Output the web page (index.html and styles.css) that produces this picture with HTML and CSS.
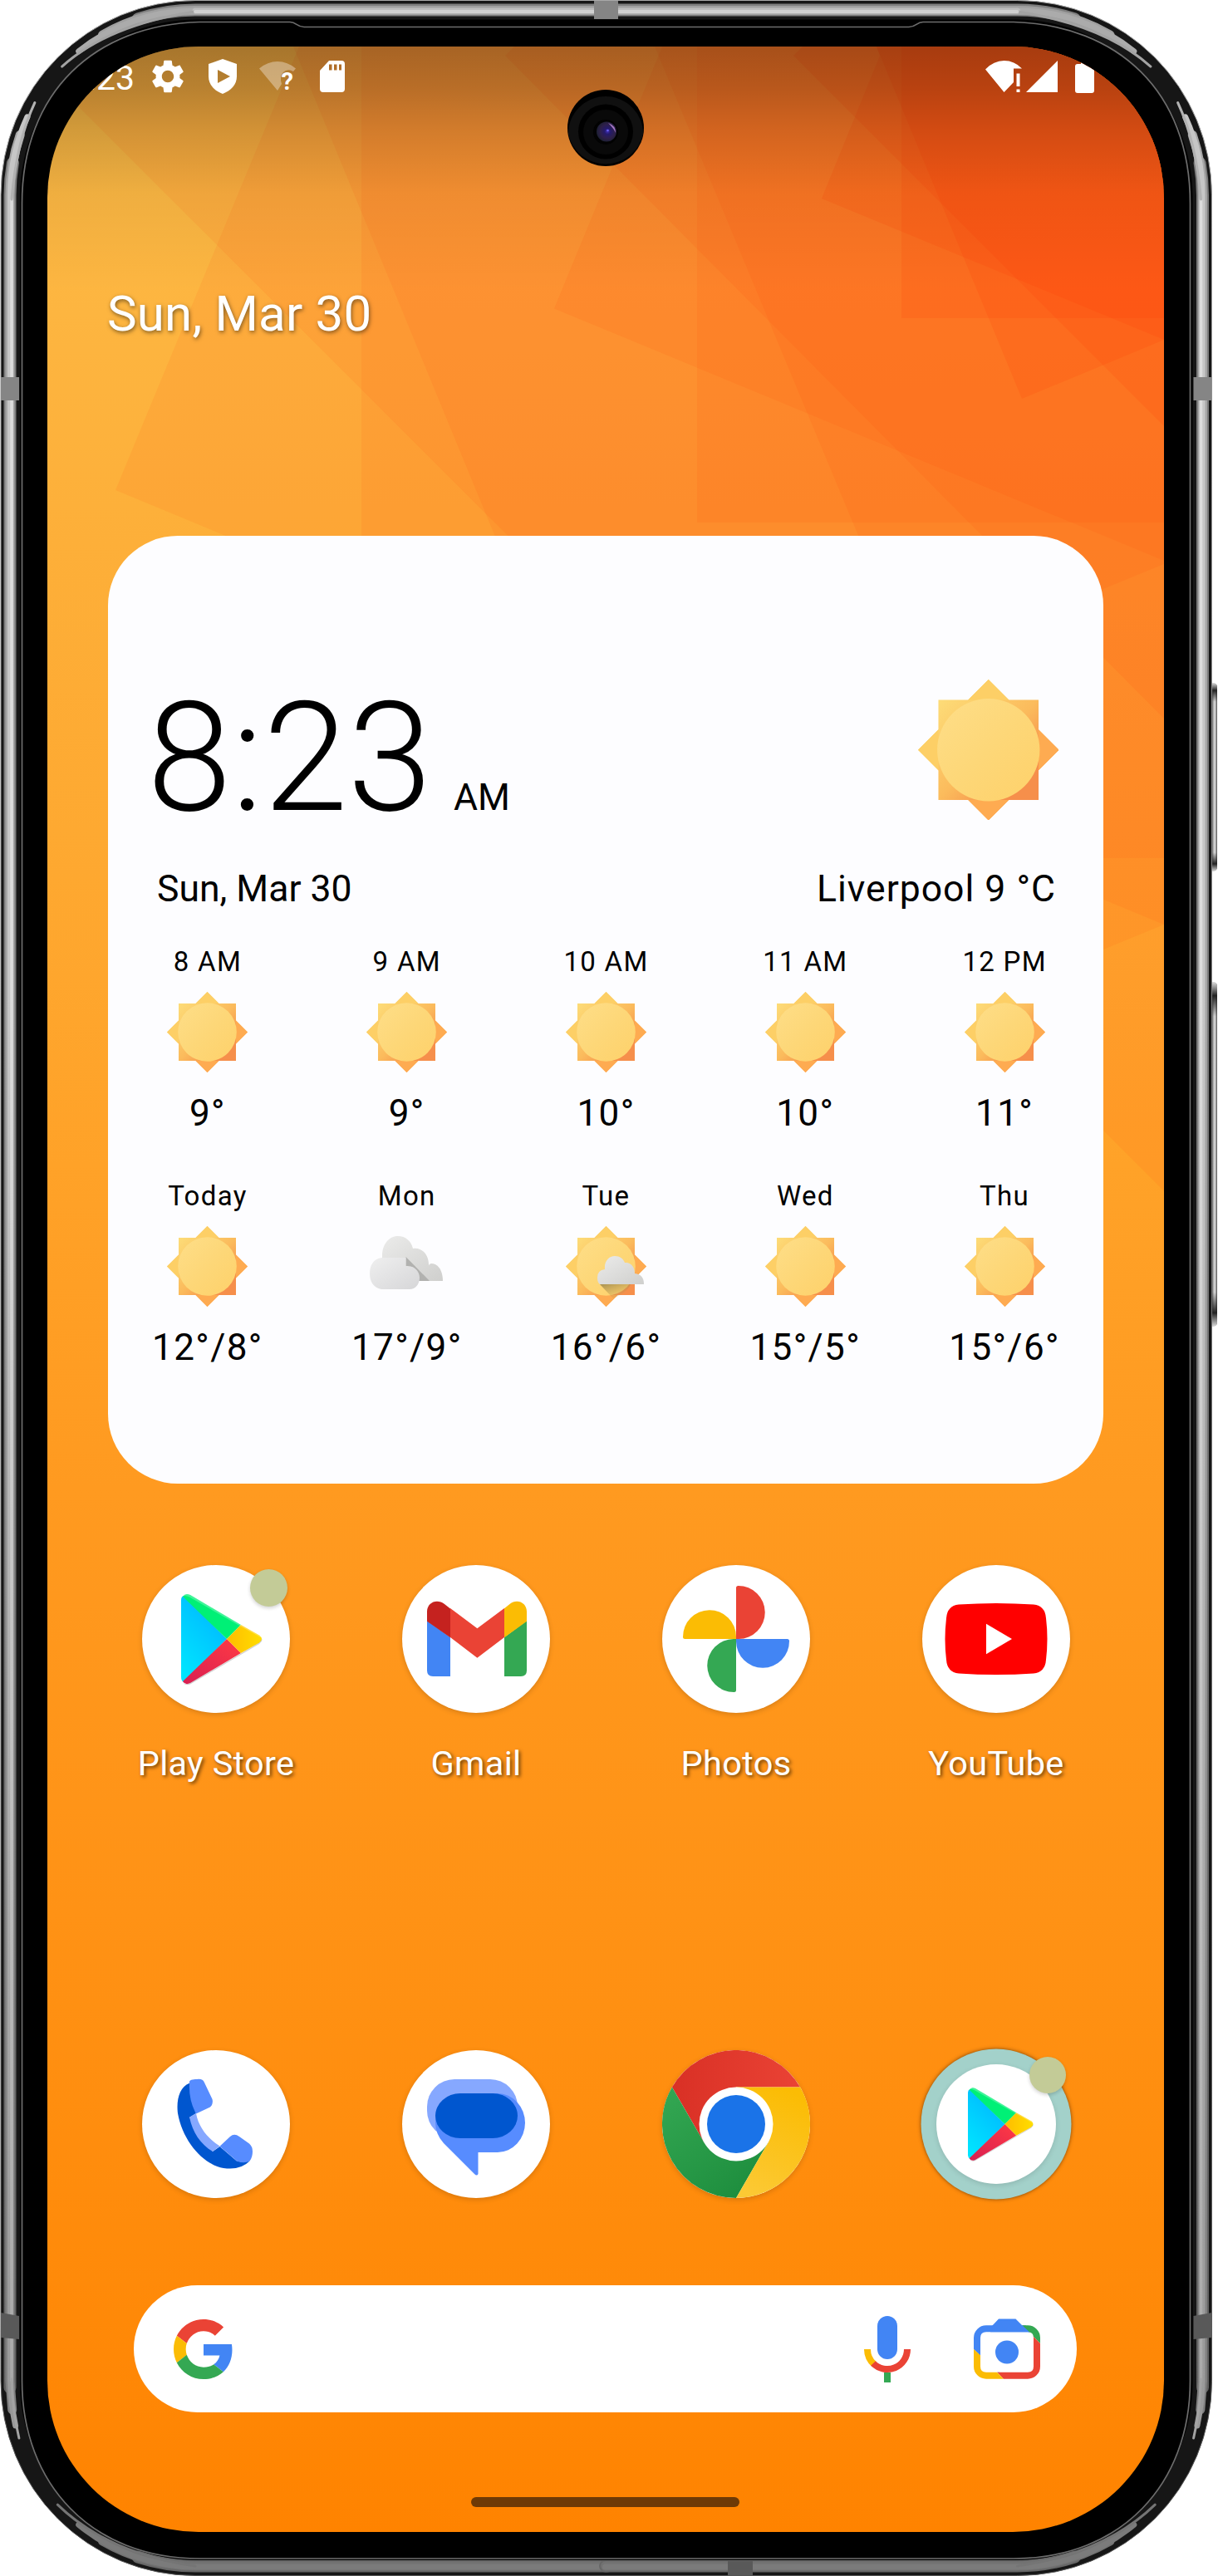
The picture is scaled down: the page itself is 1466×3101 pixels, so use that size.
FILE: index.html
```html
<!DOCTYPE html>
<html lang="en">
<head>
<meta charset="utf-8">
<title>Home screen</title>
<link rel="stylesheet" href="styles.css">
</head>
<body>
<svg class="defs" width="0" height="0" aria-hidden="true">
  <defs>
    <linearGradient id="rayA" x1="0" y1="0" x2="1" y2="1"><stop offset="0" stop-color="#fddc78"/><stop offset=".5" stop-color="#fbbb5c"/><stop offset=".8" stop-color="#f68f4b"/><stop offset="1" stop-color="#f68f4b"/></linearGradient>
    <linearGradient id="rayB" x1=".2" y1=".2" x2=".8" y2=".8"><stop offset="0" stop-color="#fdd56a"/><stop offset=".45" stop-color="#fbc962"/><stop offset=".75" stop-color="#feac52"/><stop offset="1" stop-color="#fea04b"/></linearGradient>
    <linearGradient id="disc" x1="0" y1="0" x2="1" y2="1"><stop offset="0" stop-color="#fede88"/><stop offset=".5" stop-color="#fdd778"/><stop offset="1" stop-color="#fed16a"/></linearGradient>
    <linearGradient id="cloudBack" x1="0" y1="0" x2="1" y2="1"><stop offset="0" stop-color="#ebebea"/><stop offset="1" stop-color="#cfcfcd"/></linearGradient>
    <linearGradient id="cloudFront" x1="0" y1="0" x2="1" y2="1"><stop offset="0" stop-color="#efefef"/><stop offset="1" stop-color="#d6d6d8"/></linearGradient>
    <linearGradient id="shade" x1="0" y1="0" x2=".7" y2="1"><stop offset="0" stop-color="#8a7a45" stop-opacity=".75"/><stop offset="1" stop-color="#c9a050" stop-opacity=".1"/></linearGradient>
    <linearGradient id="playBlue" x1=".8" y1="0" x2=".2" y2="1"><stop offset="0" stop-color="#00b4ff"/><stop offset="1" stop-color="#00e5ff"/></linearGradient>
    <linearGradient id="playRed" x1="1" y1="0" x2="0" y2="1"><stop offset="0" stop-color="#ff3a44"/><stop offset="1" stop-color="#d81f52"/></linearGradient>
    <linearGradient id="playYellow"><stop offset="0" stop-color="#ffbc00"/><stop offset="1" stop-color="#ffde00"/></linearGradient>
    <linearGradient id="chRed"><stop offset="0" stop-color="#d93025"/><stop offset="1" stop-color="#ea4335"/></linearGradient>
    <linearGradient id="chYellow" x1=".6" y1="0" x2=".3" y2="1"><stop offset="0" stop-color="#fbbc04"/><stop offset="1" stop-color="#fcc934"/></linearGradient>
    <linearGradient id="chGreen" x1="0" y1="0" x2=".7" y2="1"><stop offset="0" stop-color="#34a853"/><stop offset="1" stop-color="#1e8e3e"/></linearGradient>
    <symbol id="sun" viewBox="0 0 97 97">
      <path d="M48.500 0L97 48.500 48.500 97 0 48.500z" fill="url(#rayB)"/>
      <path d="M14 14h69v69H14z" fill="url(#rayA)"/>
      <path d="M48.500 0L62.500 14H34.500zM0 48.500L14 34.500v28z" fill="#fdcf66"/>
      <path d="M97 48.500L83 34.500v28zM48.500 97L34.500 83h28z" fill="#feab51"/>
      <circle cx="48.500" cy="48.500" r="35.300" fill="url(#disc)"/>
    </symbol>
    <symbol id="cloudy" viewBox="0 0 97 97">
      <path d="M20 72C14 45 17 12 38 12C47 12 53 17 55 27C67 25 75 33 74 56C85 54 92 63 91 84H20z" fill="none"/>
      <path d="M19 60V36C19 22 27 12 38 12C47 12 54 18 56 27C67 25 75 35 75 46V56Q73 46 78 45C86 45 92 53 92 66H40z" fill="url(#cloudBack)"/>
      <path d="M47.500 37L76 66H55L47.500 48z" fill="#b1b1af"/>
      <path d="M18 76C8 74 4 66 4 57C4 45 11 38 20 38L47.500 38V48C57 47 64 54 64 62C64 70 59 76 52 76z" fill="url(#cloudFront)"/>
    </symbol>
    <symbol id="partly" viewBox="0 0 97 97">
      <use href="#sun" width="97" height="97"/>
      <path d="M41 70L57 87C66 83 76 77 78 70z" fill="url(#shade)"/>
      <path d="M41 70Q38 68 38 62Q38 53 47 52C46 42 52 36 59 36C65 36 69 39 71 44C78 43 83 49 83 57Q94 58 94 70z" fill="url(#cloudBack)"/>
    </symbol>
    <symbol id="play" viewBox="0 0 178 178">
      <path d="M50 37L102 89 50 141Q47 139 47 135V42Q47 38 50 37z" fill="url(#playBlue)"/>
      <path d="M49 38Q52 33 58 36L119 72 102 89z" fill="#00f076"/>
      <path d="M49 140Q52 145 58 142L119 106 102 89z" fill="url(#playRed)"/>
      <path d="M119 72L141 84.500Q147 89 141 93.500L119 106 102 89z" fill="url(#playYellow)"/>
      <path d="M49 141Q52 145 58 142L141 93.500 144.500 89Q145 92 141 95L58 143.500Q52 146 49 141z" fill="#000" opacity=".18"/>
      <path d="M49 37.500Q52 33 58 36L141 84.500 144 88Q141 86 119 74L57 38.500Q52 36 49 37.500z" fill="#fff" opacity=".25"/>
    </symbol>
  </defs>
</svg>

<main class="phone">
  <svg class="frame" viewBox="0 0 1466 3101" aria-hidden="true">
    <defs>
      <linearGradient id="btn"><stop offset="0" stop-color="#333"/><stop offset=".55" stop-color="#333"/><stop offset=".75" stop-color="#d8d8d8"/><stop offset=".88" stop-color="#bdbdbd"/><stop offset="1" stop-color="#444"/></linearGradient>
      <linearGradient id="btnEnds" x1="0" y1="0" x2="0" y2="1"><stop offset="0" stop-color="#ddd"/><stop offset=".04" stop-color="#222"/><stop offset=".1" stop-color="#222" stop-opacity="0"/><stop offset=".9" stop-color="#222" stop-opacity="0"/><stop offset=".96" stop-color="#222"/><stop offset="1" stop-color="#ddd"/></linearGradient>
      <linearGradient id="shellTone" x1="0" y1="0" x2="0" y2="1"><stop offset="0" stop-color="#a8a8a8"/><stop offset=".5" stop-color="#777"/><stop offset="1" stop-color="#555"/></linearGradient>
      <linearGradient id="m1" gradientUnits="userSpaceOnUse" x1="0" y1="1200" x2="0" y2="2900"><stop offset="0" stop-color="#7c7c7c"/><stop offset="1" stop-color="#616161"/></linearGradient>
      <linearGradient id="m2" gradientUnits="userSpaceOnUse" x1="0" y1="1200" x2="0" y2="2900"><stop offset="0" stop-color="#a6a6a6"/><stop offset="1" stop-color="#7f7f7f"/></linearGradient>
      <linearGradient id="m3" gradientUnits="userSpaceOnUse" x1="0" y1="1200" x2="0" y2="2900"><stop offset="0" stop-color="#c6c6c6"/><stop offset="1" stop-color="#999"/></linearGradient>
      <linearGradient id="m4" gradientUnits="userSpaceOnUse" x1="0" y1="1200" x2="0" y2="2900"><stop offset="0" stop-color="#dcdcdc"/><stop offset="1" stop-color="#a9a9a9"/></linearGradient>
      <g id="halfShell" fill="none" stroke-linecap="round">
        <g stroke-width="15"><path stroke="url(#m1)" d="M15.400 196.300A223 223 0 0 0 12 235V2874"/><path stroke="#7f7f7f" d="M166.100 22.900A223 223 0 0 1 235 12H731"/><path stroke="#666" d="M166.100 3078.100A223 223 0 0 0 235 3089H731"/></g>
        <g stroke-width="11"><path stroke="url(#m2)" d="M24.200 162.400A223 223 0 0 0 12 235V2866L14.700 2900.900"/><path stroke="#a0a0a0" d="M123.500 41.900A223 223 0 0 1 235 12.500H731"/><path stroke="#727272" d="M123.500 3059.100A223 223 0 0 0 235 3089H731"/></g>
        <g stroke-width="7"><path stroke="url(#m3)" d="M32.900 140.800A223 223 0 0 0 12.500 235V2866Q13 2894 18.600 2920"/><path stroke="#ababab" d="M94.700 61.700A223 223 0 0 1 235 13"/><path stroke="#bcbcbc" d="M235 13H731"/><path stroke="#7b7b7b" d="M94.700 3039.300A223 223 0 0 0 235 3090H731"/></g>
        <path stroke-width="3.500" stroke="url(#m4)" d="M14 240V2866"/><path stroke-width="3" stroke="#b2b2b2" d="M41.900 123.500Q20 170 14 240"/><path stroke-width="3" stroke="#a3a3a3" d="M14 2864Q15 2902 22.900 2935"/>
        <path stroke-width="3" stroke="#a3a3a3" d="M74.600 80.100Q130 30 235 14"/><path stroke-width="4" stroke="#d0d0d0" d="M235 14H731"/><path stroke-width="3" stroke="#757575" d="M69.300 3015.200Q130 3074 235 3089"/>
      </g>
    </defs>
    <rect x="1450" y="822" width="15" height="227" rx="5" fill="url(#btn)"/>
    <rect x="1450" y="822" width="15" height="227" rx="5" fill="url(#btnEnds)"/>
    <rect x="1450" y="1182" width="15" height="415" rx="5" fill="url(#btn)"/>
    <rect x="1450" y="1182" width="15" height="415" rx="5" fill="url(#btnEnds)"/>
    <rect x="1" y=".5" width="1457.500" height="3100" rx="234" fill="#161616" stroke="url(#shellTone)"/>
    <use href="#halfShell"/>
    <use href="#halfShell" transform="matrix(-1 0 0 1 1459.500 0)"/>
    <path fill="#858585" d="M1 454h22v28H1zM1436.500 454h22v28h-22zM715 1h29v22h-29z"/>
    <path d="M1 2784l22 4v28l-22-2zM1458.500 2784l-22 4v28l22-2zM876 3083h30v17h-30z" fill="#595959"/>
    <rect x="24" y="23.500" width="1411.500" height="3058.500" rx="214" fill="#000"/>
    <path d="M240 26.500H349C357 26.500 357 32.500 366 32.500H1094C1103 32.500 1103 26.500 1111 26.500H1220C1345 30 1432.500 110 1432.500 245V2866C1432.500 2990 1350 3080 1220 3080H240C110 3080 26.500 2990 26.500 2866V245C26.500 110 115 30 240 26.500z" fill="#000" stroke="#6d6d6d" stroke-width="1.700"/>
  </svg>

  <section class="screen">
    <svg class="wallpaper" viewBox="57 56 1344 2992" aria-hidden="true">
      <defs>
        <linearGradient id="base" x1="0" y1="0" x2="0" y2="1"><stop offset="0" stop-color="#fdbc48"/><stop offset=".2" stop-color="#fdaf39"/><stop offset=".45" stop-color="#ffa228"/><stop offset=".58" stop-color="#ff9a20"/><stop offset=".75" stop-color="#ff9215"/><stop offset=".9" stop-color="#ff8a09"/><stop offset="1" stop-color="#ff8300"/></linearGradient>
        <linearGradient id="topShade" gradientUnits="userSpaceOnUse" x1="0" y1="56" x2="0" y2="350"><stop offset="0" stop-opacity=".34"/><stop offset=".17" stop-opacity=".27"/><stop offset=".35" stop-opacity=".165"/><stop offset=".6" stop-opacity=".055"/><stop offset="1" stop-opacity="0"/></linearGradient>
      </defs>
      <path d="M57 56h1344v2992H57z" fill="url(#base)"/>
      <g fill="#ff3c0a" fill-opacity=".075">
        <path d="M435 56H1401V1033H435z"/>
        <path d="M139 590L360 56H1401V1113z"/>
        <path d="M353 56L877 1328 1401 1113V56z"/>
        <path d="M57 91V56H1401V1434z"/>
      </g>
      <g fill="#ff3c0a" fill-opacity=".095">
        <path d="M839 56H1401V629H839z"/>
        <path d="M667 371.500L797 56H1401V675z"/>
        <path d="M788 56L1099 803 1401 679V56z"/>
        <path d="M619 56L608 67 1401 865V56z"/>
      </g>
      <g fill="#ff3c0a" fill-opacity=".14">
        <path d="M1085 56H1401V383H1085z"/>
        <path d="M989 239L1059 67 1055 56H1401V409z"/>
        <path d="M1055 56L1230 480 1401 409V56z"/>
        <path d="M966 56L955 67 1401 513V56z"/>
      </g>
      <path d="M57 56h1344v300H57z" fill="url(#topShade)"/>
    </svg>

    <div class="statusbar">
      <div class="status-left">
        <span class="status-time">8:23</span>
        <svg class="ic-gear" width="40" height="40" viewBox="2 2 20 20"><path fill="#fff" d="M19.140 12.940c.04-.3.060-.61.060-.94s-.02-.64-.07-.94l2.030-1.580c.18-.14.230-.41.120-.61l-1.920-3.320c-.12-.22-.37-.29-.59-.22l-2.390.96c-.5-.38-1.030-.7-1.620-.94l-.36-2.540c-.04-.24-.24-.41-.48-.41h-3.840c-.24 0-.43.170-.47.410l-.36 2.540c-.59.240-1.130.57-1.620.94l-2.390-.96c-.22-.08-.47 0-.59.220L2.740 8.870c-.12.210-.08.470.12.610l2.030 1.580c-.05.3-.09.63-.09.94s.02.640.070.94l-2.030 1.580c-.18.140-.23.410-.12.610l1.920 3.320c.12.220.37.290.59.220l2.390-.96c.5.380 1.030.7 1.620.94l.36 2.540c.05.240.24.410.48.410h3.840c.24 0 .44-.17.470-.41l.36-2.540c.59-.24 1.130-.56 1.620-.94l2.390.96c.22.080.47 0 .59-.22l1.920-3.320c.12-.22.070-.47-.12-.61l-2.010-1.580zM12 15.600c-1.980 0-3.600-1.620-3.600-3.600s1.620-3.600 3.600-3.600 3.600 1.620 3.600 3.600-1.620 3.600-3.600 3.600z"/></svg>
        <svg class="ic-shield" width="34" height="42" viewBox="0 0 34 42"><path fill="#fff" fill-rule="evenodd" d="M17 0L34 6V21C34 31 27 38 17 42C7 38 0 31 0 21V6zM11 13v16l15-8z"/></svg>
        <svg class="ic-wifi" width="46" height="38" viewBox="0 0 46 38"><path fill="#fff" fill-opacity=".35" d="M0 9.500Q10 1 22 1T44 9.500L41 13Q34 9 29 14T27 28L22 36z"/><text x="26.500" y="34.500" class="wifi-mark">?</text></svg>
        <svg class="ic-sd" width="30" height="38" viewBox="0 0 30 38"><path fill="#fff" fill-rule="evenodd" d="M11 0H26Q30 0 30 4V34Q30 38 26 38H4Q0 38 0 34V12zM11 4.500v7h3.500v-7zM17 4.500v7h3.500v-7zM23 4.500v7h3v-7z"/></svg>
      </div>
      <div class="status-right">
        <svg width="44" height="38" viewBox="0 0 44 38"><path fill="#fff" d="M0 10.500Q10 0 22.500 0T44 9.500H34V26L22.500 38zM37.500 15.500h4V31h-4zM37.500 34.500h4V38h-4z"/></svg>
        <svg class="ic-signal" width="38" height="38" viewBox="0 0 38 38"><path fill="#fff" d="M38 0V38H0z"/></svg>
        <svg class="ic-battery" width="23" height="39" viewBox="0 0 23 39"><path fill="#fff" d="M7 0h9v4h4q3 0 3 3v29q0 3-3 3H3q-3 0-3-3V7q0-3 3-3h4z"/></svg>
      </div>
    </div>

    <div class="glance">Sun, Mar 30</div>

    <article class="weather">
      <div class="weather-head">
        <div class="clock"><span class="clock-time">8:23</span><span class="clock-ampm">AM</span></div>
        <svg class="sun-big"><use href="#sun"/></svg>
      </div>
      <div class="weather-sub"><span>Sun, Mar 30</span><span class="place">Liverpool 9 °C</span></div>
      <div class="forecast">
        <div class="slot"><span class="slot-label">8 AM</span><svg class="slot-icon"><use href="#sun"/></svg><span class="slot-temp">9°</span></div>
        <div class="slot"><span class="slot-label">9 AM</span><svg class="slot-icon"><use href="#sun"/></svg><span class="slot-temp">9°</span></div>
        <div class="slot"><span class="slot-label">10 AM</span><svg class="slot-icon"><use href="#sun"/></svg><span class="slot-temp">10°</span></div>
        <div class="slot"><span class="slot-label">11 AM</span><svg class="slot-icon"><use href="#sun"/></svg><span class="slot-temp">10°</span></div>
        <div class="slot"><span class="slot-label">12 PM</span><svg class="slot-icon"><use href="#sun"/></svg><span class="slot-temp">11°</span></div>
      </div>
      <div class="forecast forecast-days">
        <div class="slot"><span class="slot-label">Today</span><svg class="slot-icon"><use href="#sun"/></svg><span class="slot-temp">12°/8°</span></div>
        <div class="slot"><span class="slot-label">Mon</span><svg class="slot-icon"><use href="#cloudy"/></svg><span class="slot-temp">17°/9°</span></div>
        <div class="slot"><span class="slot-label">Tue</span><svg class="slot-icon"><use href="#partly"/></svg><span class="slot-temp">16°/6°</span></div>
        <div class="slot"><span class="slot-label">Wed</span><svg class="slot-icon"><use href="#sun"/></svg><span class="slot-temp">15°/5°</span></div>
        <div class="slot"><span class="slot-label">Thu</span><svg class="slot-icon"><use href="#sun"/></svg><span class="slot-temp">15°/6°</span></div>
      </div>
    </article>

    <nav class="apps">
      <div class="app"><div class="disc"><svg class="glyph"><use href="#play"/></svg><i class="dot"></i></div><span class="app-name">Play Store</span></div>
      <div class="app"><div class="disc">
        <svg class="glyph" viewBox="0 0 178 178">
          <path d="M30 67V127Q30 134 37 134H58V87z" fill="#4285f4"/>
          <path d="M150 67V127Q150 134 143 134H123V87z" fill="#34a853"/>
          <path d="M58 52L90.400 76.300 123 52V87L90.400 111.700 58 87z" fill="#ea4335"/>
          <path d="M30 67.700V56C30 45 42 40 51 47L58 52.600V87.200z" fill="#c5221f"/>
          <path d="M150 67.700V56C150 45 138 40 129.500 47L123 52.200V87.200z" fill="#fbbc04"/>
        </svg></div><span class="app-name">Gmail</span></div>
      <div class="app"><div class="disc">
        <svg class="glyph" viewBox="0 0 178 178">
          <path d="M89 89V27.500Q89 25 91.500 25A32 32 0 0 1 92 89z" fill="#ea4335"/>
          <path d="M89 89V27.500Q89 25 91.500 25A32 32 0 0 1 92 89z" fill="#4285f4" transform="rotate(90 89 89)"/>
          <path d="M89 89V27.500Q89 25 91.500 25A32 32 0 0 1 92 89z" fill="#34a853" transform="rotate(180 89 89)"/>
          <path d="M89 89V27.500Q89 25 91.500 25A32 32 0 0 1 92 89z" fill="#fbbc04" transform="rotate(270 89 89)"/>
        </svg></div><span class="app-name">Photos</span></div>
      <div class="app"><div class="disc">
        <svg class="glyph" viewBox="0 0 178 178">
          <path d="M44 47.500Q89 44.500 134 47.500Q148 49 149 64Q152 89 149 114Q148 129 134 130.500Q89 133.500 44 130.500Q30 129 29 114Q26 89 29 64Q30 49 44 47.500z" fill="#f00"/>
          <path d="M77 70.700L108 89 77 107.300z" fill="#fff"/>
        </svg></div><span class="app-name">YouTube</span></div>
    </nav>

    <nav class="dock">
      <div class="disc">
        <svg class="glyph" viewBox="0 0 178 178">
          <path d="M57 39.700C45 44 41 60 43 76C49 110 74 138 98 142Q118 145 129.500 133.500L114 133.500 93.500 116 85 122 57 81 65 76z" fill="#0056cf"/>
          <path d="M65 76L57 80.700C61 99 70 113 85 122L93.500 115.500C79 106 68 93 65 76z" fill="#86a8ff"/>
          <path d="M57 40C56 36 60 35 66 35Q73 34 75 39L84.500 59Q86 65 82 68.500L65 76.500Q56 60 57 40z" fill="#578cff"/>
          <path d="M93.500 115.700L106 104Q111 99.500 117 104L129 112.500Q133 116 133 122Q133 129 129.500 133.500Q123 137 114.500 133.700z" fill="#578cff"/>
        </svg></div>
      <div class="disc">
        <svg class="glyph" viewBox="0 0 178 178">
          <rect x="30" y="35" width="109" height="71" rx="33" fill="#86a8ff"/>
          <path d="M73 52H115A33 35.500 0 0 1 115 123H91.500V149Q90 152 87 149L50 112Q40 101 40 87A33 35 0 0 1 73 52z" fill="#578cff"/>
          <rect x="40" y="52" width="99" height="54" rx="30" ry="27" fill="#0056cf"/>
        </svg></div>
      <div class="disc">
        <svg class="glyph" viewBox="0 0 178 178">
          <path d="M11.900 44.500A89 89 0 0 1 166.100 44.500H89L50.500 111.200z" fill="url(#chRed)"/>
          <path d="M11.900 44.500A89 89 0 0 0 89 178L127.500 111.200H50.500z" fill="url(#chGreen)"/>
          <path d="M166.100 44.500A89 89 0 0 1 89 178L127.500 111.200 89 44.500z" fill="url(#chYellow)"/>
          <circle cx="89" cy="89" r="44.500" fill="#fff"/><circle cx="89" cy="89" r="35" fill="#1a73e8"/>
        </svg></div>
      <div class="disc folder"><div class="folder-inner"><svg class="glyph"><use href="#play"/></svg></div><i class="dot"></i></div>
    </nav>

    <div class="search">
      <svg class="google" viewBox="0 0 48 48"><path fill="#ea4335" d="M24 9.500c3.540 0 6.710 1.220 9.210 3.600l6.850-6.850C35.900 2.380 30.470 0 24 0 14.620 0 6.510 5.380 2.560 13.220l7.980 6.190C12.430 13.720 17.740 9.500 24 9.500z"/><path fill="#4285f4" d="M46.980 24.550c0-1.570-.15-3.090-.38-4.550H24v9.020h12.940c-.58 2.960-2.260 5.480-4.780 7.180l7.730 6c4.510-4.180 7.090-10.360 7.090-17.650z"/><path fill="#fbbc05" d="M10.530 28.590c-.48-1.450-.76-2.990-.76-4.590s.27-3.140.76-4.590l-7.980-6.190C.92 16.460 0 20.120 0 24c0 3.880.92 7.540 2.560 10.780l7.970-6.190z"/><path fill="#34a853" d="M24 48c6.480 0 11.930-2.130 15.890-5.810l-7.730-6c-2.150 1.450-4.920 2.300-8.160 2.300-6.260 0-11.570-4.220-13.470-9.910l-7.980 6.190C6.510 42.620 14.620 48 24 48z"/></svg>
      <svg class="mic" viewBox="0 0 56 80"><path fill="none" stroke="#fbbc04" stroke-width="8" d="M4 40A24 24 0 0 0 12 58"/><path fill="none" stroke="#ea4335" stroke-width="8" d="M52 40A24 24 0 0 1 11 57"/><rect x="16" width="24" height="52" rx="12" fill="#4285f4"/><path fill="#34a853" d="M24 68h8v12h-8z"/></svg>
      <svg class="lens" viewBox="0 0 80 73">
        <defs><clipPath id="lensRing"><path clip-rule="evenodd" d="M15 8.300H65A15 15 0 0 1 80 23.300V57.700A15 15 0 0 1 65 72.700H15A15 15 0 0 1 0 57.700V23.300A15 15 0 0 1 15 8.300zM15 16.300Q8 16.300 8 23.300V57.700Q8 64.700 15 64.700H65Q72 64.700 72 57.700V23.300Q72 16.300 65 16.300z"/></clipPath></defs>
        <g clip-path="url(#lensRing)"><path fill="#4285f4" d="M0 0H58L68 18 30 66 0 37z"/><path fill="#34a853" d="M58 8H80V30L66 16z"/><path fill="#ea4335" d="M80 30L68 18 22 58 36 73H80z"/><path fill="#fbbc04" d="M0 37L10 46 36 73H0z"/></g>
        <path fill="#4285f4" d="M22 9L30 .5H50.500L59 9 67 16.300H20z"/><circle cx="40" cy="40.500" r="14" fill="#4285f4"/>
      </svg>
    </div>
    <div class="gesture"></div>
    <svg class="camera" viewBox="0 0 92 92" aria-hidden="true">
      <defs><radialGradient id="lensGlow" cx=".55" cy=".48" r=".6"><stop offset="0" stop-color="#4330b8"/><stop offset=".25" stop-color="#241a6a"/><stop offset=".6" stop-color="#2e1f4a"/><stop offset="1" stop-color="#17202c"/></radialGradient></defs>
      <circle cx="46" cy="46" r="46" fill="#000"/><path d="M1 53A45 45 0 0 1 91 53A46 46 0 0 1 1 53z" fill="#101010"/>
      <circle cx="46" cy="50.500" r="33" fill="#000"/><circle cx="46" cy="51" r="27" fill="#090909"/>
      <circle cx="46" cy="51" r="15" fill="#020202"/><circle cx="47" cy="50.500" r="12" fill="url(#lensGlow)"/>
      <path d="M49 40Q58 43 58 52Q56 47 49 40z" fill="#a678c4"/><circle cx="48.500" cy="49" r="1.300" fill="#6a60f0"/>
    </svg>
  </section>
</main>
</body>
</html>
```

FILE: styles.css
```css
* { box-sizing: border-box; }

body {
  margin: 0;
  background: #fff;
  font-family: Roboto, "Liberation Sans", sans-serif;
}

svg { display: block; flex: none; }
.defs { position: absolute; }

.phone {
  position: relative;
  width: 1466px;
  height: 3101px;
  padding: 56px 0 0 57px;
  overflow: hidden;
}

.frame {
  position: absolute;
  inset: 0;
  width: 1466px;
  height: 3101px;
}

.screen {
  position: relative;
  z-index: 0;
  width: 1344px;
  height: 2992px;
  border-radius: 182px;
  overflow: hidden;
  display: flex;
  flex-direction: column;
}

.wallpaper {
  position: absolute;
  inset: 0;
  z-index: -1;
  width: 1344px;
  height: 2992px;
}

/* status bar */
.statusbar {
  height: 72px;
  display: flex;
  justify-content: space-between;
  align-items: center;
  padding: 0 84px 0 25px;
  color: #fff;
}
.status-left, .status-right { display: flex; align-items: center; }
.status-time { width: 80px; font-size: 41px; line-height: 48px; margin-right: 20px; text-align: right; padding-top: 4px; }
.ic-shield { margin-left: 29px; }
.ic-wifi { margin-left: 27px; }
.ic-sd { margin-left: 27px; }
.ic-signal { margin-left: 5px; }
.ic-battery { margin-left: 21px; }
.wifi-mark { font-size: 29px; font-weight: 700; fill: #fff; }

.glance {
  margin: 215px 0 0 72px;
  font-size: 60px;
  line-height: 70px;
  letter-spacing: .2px;
  color: #fff;
  text-shadow: 1px 2px 5px rgba(0, 0, 0, .5);
}

/* weather widget */
.weather {
  margin: 232px 0 0 73px;
  width: 1198px;
  height: 1141px;
  padding-top: 167px;
  border-radius: 84px;
  background: #fdfdff;
  color: #000;
}
.weather-head {
  height: 200px;
  padding: 0 54px 0 47px;
  display: flex;
  justify-content: space-between;
}
.clock { display: flex; align-items: baseline; line-height: 202px; }
.clock-time { font-size: 183px; font-weight: 300; }
.clock-ampm { font-size: 44.500px; margin-left: 26px; }
.sun-big { width: 169.500px; height: 169.500px; margin-top: 5.500px; }

.weather-sub {
  margin-top: 31.500px;
  padding: 0 57px 0 59px;
  display: flex;
  justify-content: space-between;
  font-size: 44.500px;
  line-height: 52px;
}
.weather-sub .place { letter-spacing: 1px; }

.forecast {
  width: 1199px;
  margin: 42px 0 0;
  display: grid;
  grid-template-columns: repeat(5, 1fr);
}
.forecast-days { margin-top: 55px; }
.slot { display: flex; flex-direction: column; align-items: center; }
.slot-label { font-size: 33px; line-height: 40px; letter-spacing: 1.300px; }
.slot-icon { width: 97px; height: 97px; margin: 16px 0 23px; }
.slot-temp { font-size: 44px; line-height: 52px; letter-spacing: 1.400px; }
.forecast-days { margin-top: 54px; }

/* launcher icons */
.apps, .dock {
  display: grid;
  grid-template-columns: repeat(4, 313px);
  justify-items: center;
  margin-left: 46.500px;
}
.apps { margin-top: 98px; }
.app { display: flex; flex-direction: column; align-items: center; }
.disc {
  position: relative;
  width: 178px;
  height: 178px;
  border-radius: 50%;
  background: #fff;
  box-shadow: 0 2px 6px rgba(0, 0, 0, .16);
}
.glyph { width: 100%; height: 100%; }
.app-name {
  margin-top: 37px;
  font-size: 41.500px;
  line-height: 48px;
  color: #fff;
  letter-spacing: .3px;
  text-shadow: 2px 2px 4px rgba(0, 0, 0, .6);
}
.dot {
  position: absolute;
  top: 5px;
  right: 3px;
  width: 45px;
  height: 45px;
  border-radius: 50%;
  background: #c3cb97;
  box-shadow: 0 2px 4px rgba(0, 0, 0, .18);
}
.dock { margin-top: 321px; }
.folder {
  background: #a3d1ca;
  display: grid;
  place-items: center;
  box-shadow: 0 0 0 1.500px #a3d1ca, 0 0 5px 1px rgba(60, 30, 0, .8);
}
.folder-inner {
  width: 144px;
  height: 144px;
  border-radius: 50%;
  background: #fff;
  box-shadow: 0 2px 6px rgba(0, 0, 0, .12);
}
.folder .dot { top: 8px; right: 5px; width: 44px; height: 44px; }

.search {
  margin: 105px 0 0 104px;
  width: 1135px;
  height: 153px;
  border-radius: 77px;
  background: #fff;
  display: flex;
  align-items: center;
  padding: 0 44px 0 48px;
}
.google { width: 72px; height: 72px; }
.mic { width: 56px; height: 80px; margin-left: auto; }
.lens { width: 80px; height: 73px; margin-left: 76px; }

.gesture {
  margin: 102px auto 0 510px;
  width: 323px;
  height: 12px;
  border-radius: 6px;
  background: #6e3a06;
}

.camera {
  position: absolute;
  left: 626px;
  top: 52px;
  width: 92px;
  height: 92px;
}
```
